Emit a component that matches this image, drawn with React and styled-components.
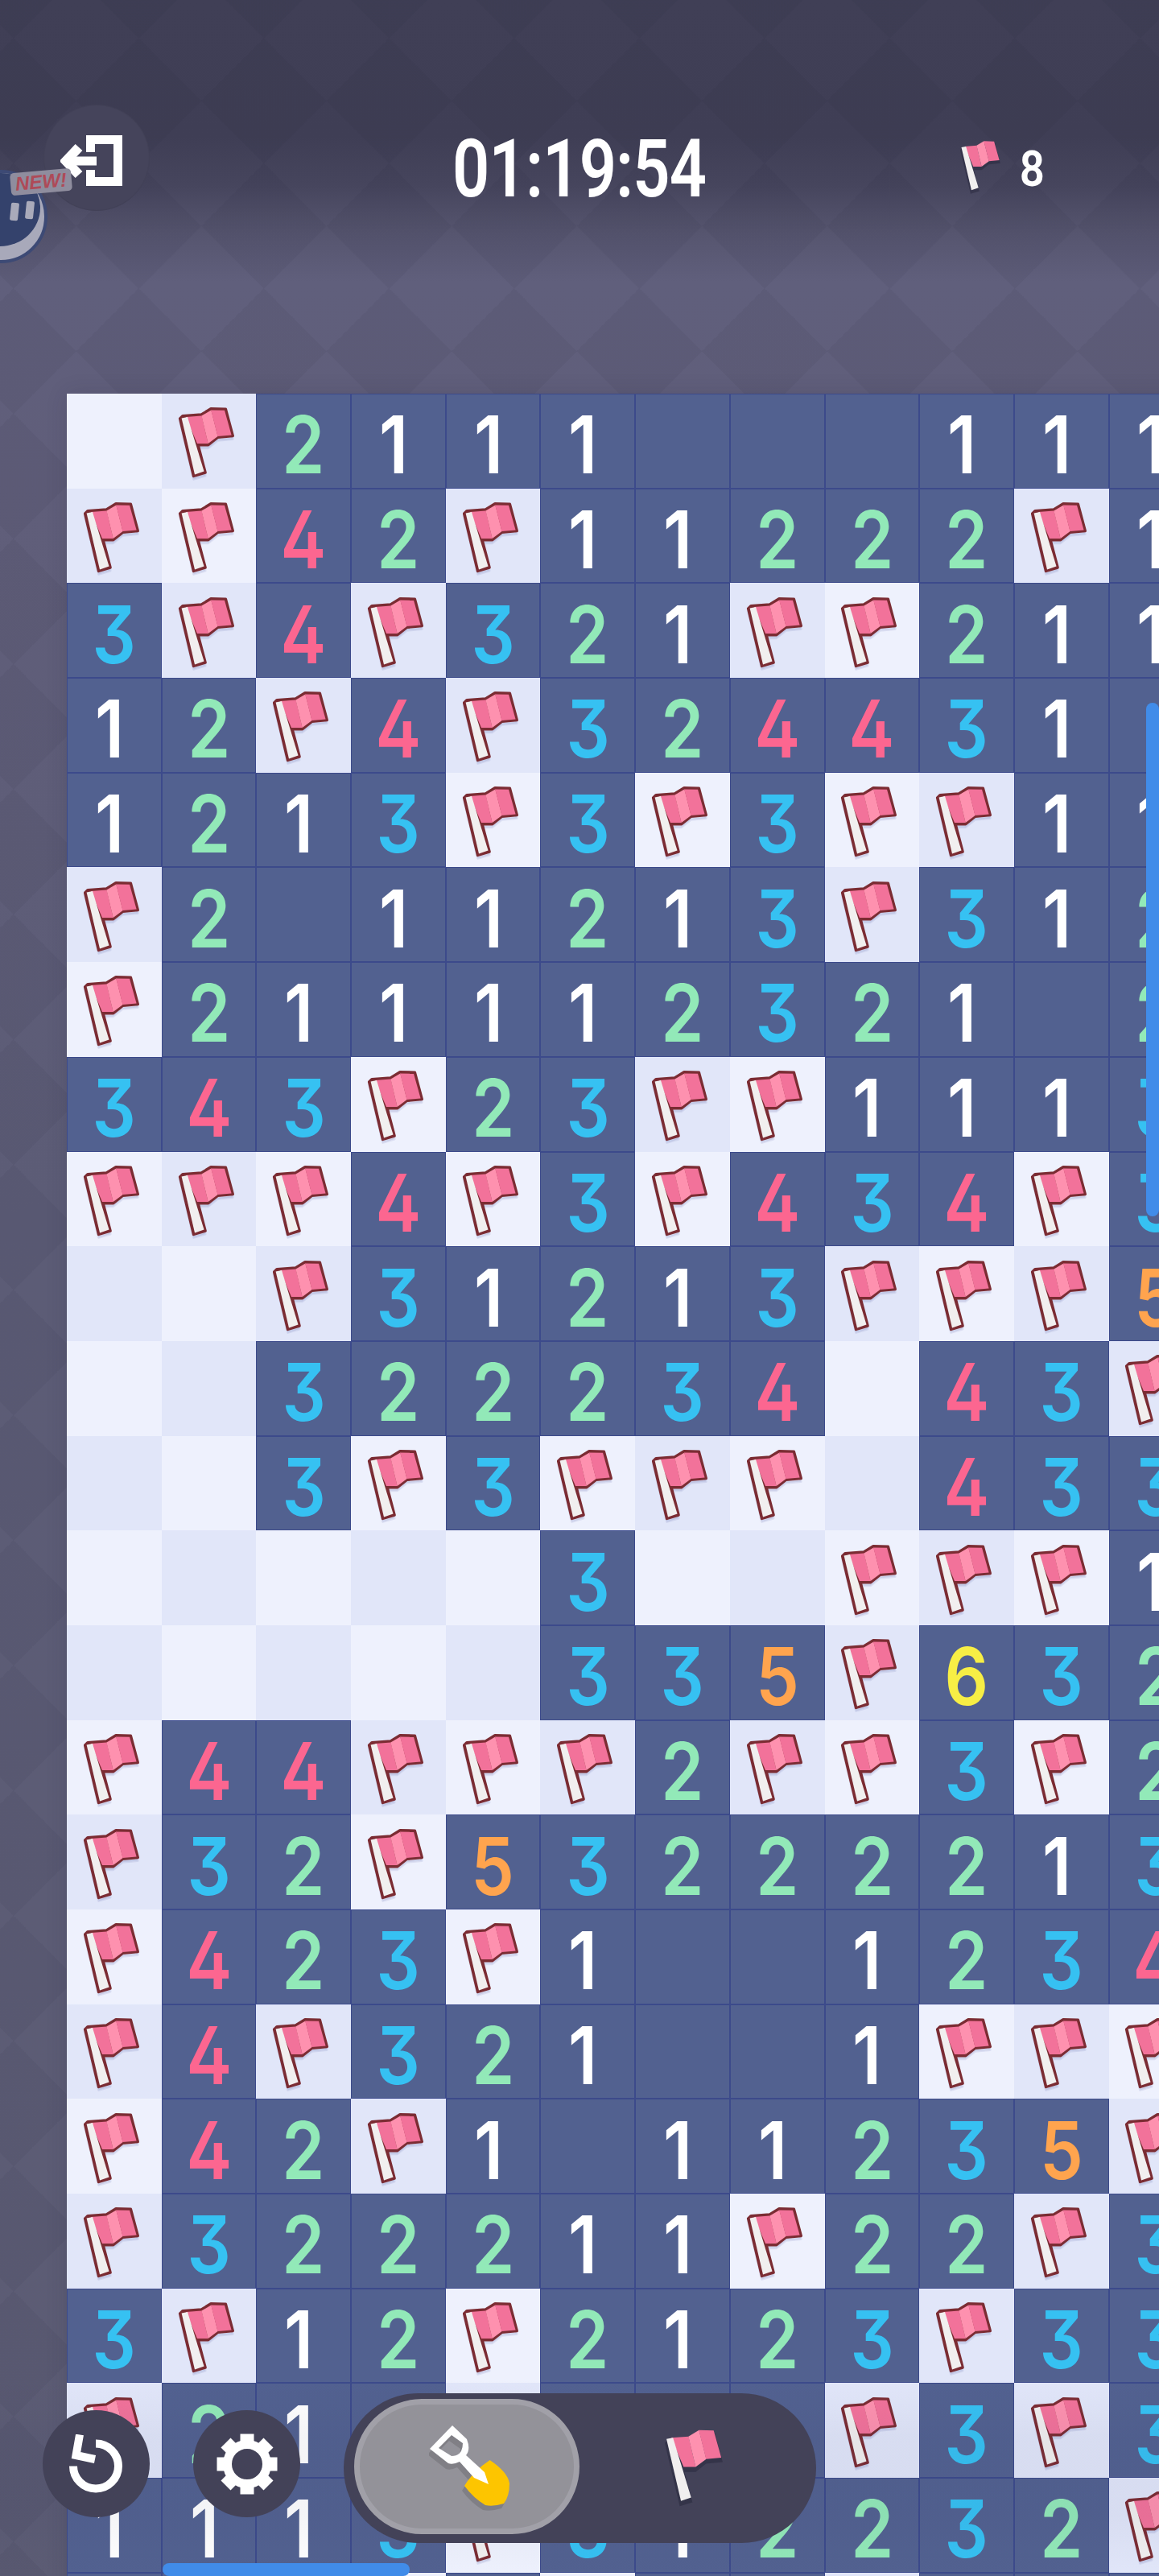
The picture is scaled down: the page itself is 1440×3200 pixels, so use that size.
import styled, { createGlobalStyle } from "styled-components"

// F flag, . closed blank, 0 open blank
const BOARD = [
  ".F2111000111",
  "FF42F11222F1",
  "3F4F321FF211",
  "12F4F3244310",
  "1213F3F3FF11",
  "F2011213F312",
  "F21111232102",
  "343F23FF1113",
  "FFF4F3F434F3",
  "..F31213FFF5",
  "..322234.43F",
  "..3F3FFF.433",
  ".....3..FFF1",
  ".....335F632",
  "F44FFF2FF3F2",
  "F32F53222213",
  "F423F1001234",
  "F4F321001FFF",
  "F42F1011235F",
  "F322211F22F3",
  "3F12F2123F33",
  "F210.000F3F3",
  "1113F312232F",
  "000.0.00.000",
]

const DIGIT_COLORS = {
  1: "#ffffff",
  2: "#92e9b8",
  3: "#36c1f2",
  4: "#fc6690",
  5: "#ffa44e",
  6: "#f7ee45",
}

const GlobalStyle = createGlobalStyle`
  html, body {
    margin: 0;
    padding: 0;
    background: #5a5a74;
  }
`

const Page = styled.div`
  position: relative;
  width: 1440px;
  height: 3200px;
  overflow: hidden;
  font-family: Inter, Roboto, "Liberation Sans", sans-serif;
  background-color: #5a5a74;
  background-image:
    linear-gradient(45deg, rgba(20, 20, 40, 0.055) 25%, transparent 25%),
    linear-gradient(-45deg, rgba(20, 20, 40, 0.055) 25%, transparent 25%),
    linear-gradient(45deg, transparent 75%, rgba(20, 20, 40, 0.055) 75%),
    linear-gradient(-45deg, transparent 75%, rgba(20, 20, 40, 0.055) 75%),
    linear-gradient(
      #403f56 0,
      #3f3e55 170px,
      #46455d 230px,
      #56556f 290px,
      #605f7c 350px,
      #605e7a 600px,
      #5c5c76 1500px,
      #5c5c74 3200px
    );
  background-size: 155.5px 155.5px, 155.5px 155.5px, 155.5px 155.5px, 155.5px 155.5px, 100% 100%;
  background-position: 17px 125px, 17px 125px, 17px 125px, 17px 125px, 0 0;
  background-repeat: repeat, repeat, repeat, repeat, no-repeat;
`

const Header = styled.header`
  display: grid;
  grid-template-columns: 1fr auto 1fr;
  align-items: start;
  height: 489px;
  box-sizing: border-box;
  padding: 130px 54px 0;
`

const ExitButton = styled.button`
  display: flex;
  align-items: center;
  justify-content: center;
  justify-self: start;
  position: relative;
  z-index: 2;
  width: 132px;
  height: 132px;
  padding: 0;
  border: 1px solid rgba(60, 60, 80, 0.35);
  border-radius: 50%;
  background: #45445b;
`

const ExitSvg = styled.svg`
  margin: 6px 0 0 -13px;
`

const Timer = styled.div`
  margin-top: 27px;
  font-family: Roboto, "Liberation Sans", sans-serif;
  font-size: 100px;
  font-weight: 600;
  line-height: 105px;
  letter-spacing: -1px;
  color: #ffffff;
  transform: scaleX(0.81);
`

const FlagCount = styled.div`
  display: flex;
  align-items: center;
  justify-self: end;
  gap: 20px;
  margin: 41px 93px 0 0;
  color: #ffffff;
  font-family: Roboto, "Liberation Sans", sans-serif;
  font-size: 62px;
  font-weight: 600;
  line-height: 70px;

  span {
    display: block;
    width: 28px;
    padding-top: 4px;
    text-align: center;
    transform: scaleX(0.88);
  }
`

const Mascot = styled.div`
  position: absolute;
  left: -57px;
  top: 211px;
  width: 116px;
  height: 116px;
  overflow: hidden;
  box-sizing: border-box;
  border-radius: 50%;
  border: 4px solid #3d4a75;
  background: #a8a9ba;

  &::before {
    content: "";
    position: absolute;
    left: 3px;
    top: -5px;
    width: 100px;
    height: 96px;
    border-radius: 50%;
    background: #34426c;
  }
`

const MascotEye = styled.i`
  position: absolute;
  top: ${(p) => p.$top}px;
  left: ${(p) => p.$left}px;
  width: 10px;
  height: 22px;
  border-radius: 2px;
  background: #a9aaba;
  transform: rotate(6deg);
`

const NewBadge = styled.div`
  position: absolute;
  z-index: 3;
  left: 13px;
  top: 212px;
  padding: 0 6px;
  border-radius: 5px;
  background: #8f8d9e;
  color: #ae4a58;
  font-family: "Liberation Sans", sans-serif;
  font-size: 24px;
  font-style: italic;
  font-weight: 700;
  line-height: 28px;
  transform: rotate(-5deg);
`

const Board = styled.div`
  display: grid;
  grid-template-columns: repeat(12, 117.7px);
  grid-auto-rows: 117.7px;
  width: max-content;
  margin-left: 83px;
  box-shadow: 0 0 24px rgba(40, 40, 60, 0.16);
`

const Cell = styled.div`
  display: flex;
  align-items: center;
  justify-content: center;
  min-width: 0;
  background: ${(p) => (p.$revealed ? "#526190" : p.$odd ? "#e1e6f9" : "#eef1fd")};
  box-shadow: ${(p) => (p.$revealed ? "inset 0 0 0 1px #3c4a8b" : "none")};
`

const Digit = styled.span`
  display: block;
  padding-top: 9px;
  font-family: Inter, Roboto, sans-serif;
  font-feature-settings: "cv09" 1, "cv02" 1;
  font-size: 99px;
  font-weight: 600;
  line-height: 100px;
  color: ${(p) => DIGIT_COLORS[p.$n]};
  transform: ${(p) => (p.$n === "1" ? "translateX(-6px) " : "")}scaleX(0.86);
`

const FlagSvg = styled.svg`
  display: block;
  flex: none;
  margin: ${(p) => p.$margin || "0"};
`

const ScrollThumb = styled.div`
  position: absolute;
  background: #418ce9;
  border-radius: 8px;
`

const VerticalThumb = styled(ScrollThumb)`
  left: 1424px;
  top: 873px;
  width: 16px;
  height: 638px;
`

const HorizontalThumb = styled(ScrollThumb)`
  left: 202px;
  top: 3184px;
  width: 307px;
  height: 16px;
`

const ControlsShade = styled.div`
  position: absolute;
  left: 0;
  right: 0;
  top: 2955px;
  height: 245px;
  pointer-events: none;
  background: linear-gradient(
    rgba(40, 45, 90, 0) 0,
    rgba(40, 45, 90, 0.05) 70px,
    rgba(40, 45, 90, 0.05) 170px,
    rgba(40, 45, 90, 0) 245px
  );
`

const Controls = styled.div`
  position: absolute;
  left: 53px;
  top: 2973px;
  display: flex;
  align-items: flex-start;
  gap: 54px;
`

const RoundButton = styled.button`
  display: flex;
  align-items: center;
  justify-content: center;
  flex: none;
  width: 133px;
  height: 133px;
  margin-top: 21px;
  padding: 0;
  border: 0;
  border-radius: 50%;
  background: #434258;
`

const ToolPill = styled.div`
  display: flex;
  align-items: center;
  box-sizing: border-box;
  width: 587px;
  height: 186px;
  padding: 0 0 0 13px;
  border-radius: 93px;
  background: #434258;
`

const ToolThumb = styled.div`
  display: flex;
  align-items: center;
  justify-content: center;
  box-sizing: border-box;
  flex: none;
  width: 280px;
  height: 168px;
  margin-top: -4px;
  border: 7px solid #a1a0a8;
  border-radius: 84px;
  background: #939299;
`

const ShovelSvg = styled.svg`
  margin: 4px 0 0 8px;
`

const ToolSlot = styled.div`
  display: flex;
  align-items: center;
  justify-content: center;
  flex: 1;
  padding-right: 10px;
`

function Flag({ width = 71, plain, margin }) {
  const outline =
    "M5 10.7 L28.3 9 L40 1.8 L58.3 2.3 L67.2 35.4 L48.3 37.3 L36.7 46.7 L24 46.7 L33 81 L18.6 85.4 L1.7 14 Z"
  return (
    <FlagSvg
      $margin={margin}
      width={width}
      height={(width * 95) / 71}
      viewBox="-1 -1 71 95"
    >
      <path
        d={outline}
        transform="translate(0 4)"
        fill={plain ? "rgba(20,20,40,0.3)" : "rgba(90,100,170,0.13)"}
        stroke={plain ? "none" : "rgba(90,100,170,0.13)"}
        strokeWidth="3"
        strokeLinejoin="round"
      />
      {!plain && (
        <path d={outline} fill="#7b2c33" stroke="#7b2c33" strokeWidth="3.6" strokeLinejoin="round" />
      )}
      <polygon points="9,12 28.6,10.6 36.6,45 23,45" fill="#f2729a" />
      <polygon points="28.4,10.6 40.4,3.4 48.6,36 36.6,45" fill="#fe91af" />
      <polygon points="40.2,3.4 57,3.8 65.6,34.4 48.4,36" fill="#f2729a" />
      <polygon points="3.6,13.4 11,12 31.5,79.5 20,83.4" fill="#f1efef" />
    </FlagSvg>
  )
}

function ExitIcon() {
  return (
    <ExitSvg width="77" height="63" viewBox="0 0 77 63" fill="none" stroke="#fff" strokeWidth="11">
      <path d="M37.5 21 V5.5 H71.5 V57.5 H37.5 V43" />
      <path d="M8 32 H45" />
      <path d="M23 15 L7 32 L23 49" strokeWidth="12" />
    </ExitSvg>
  )
}

function ResetIcon() {
  return (
    <svg width="67" height="73" viewBox="0 0 67 73" fill="none" stroke="#fff">
      <path d="M33 11.5 A28 28 0 1 1 5 39.5" strokeWidth="10" />
      <path d="M13 0.5 L8.5 26 L32 31" strokeWidth="10" />
    </svg>
  )
}

function GearIcon() {
  const teeth = [0, 45, 90, 135, 180, 225, 270, 315]
  return (
    <svg width="76" height="76" viewBox="0 0 76 76">
      {teeth.map((deg) => (
        <rect key={deg} x="29.5" y="0.5" width="17" height="16" fill="#fff" transform={`rotate(${deg} 38 38)`} />
      ))}
      <circle cx="38" cy="38" r="24.5" fill="none" stroke="#fff" strokeWidth="11" />
    </svg>
  )
}

function ShovelIcon() {
  const grip =
    "M29 0 L47 17 Q52 30 46 37 L69 58 L74 73 L56 65 L38 45 Q30 49 24 47 L1 29 Z M28 12 L12 28 L28 38 Q42 38 42 22 Z"
  const blade = "M75.6 43 Q98 58 100 72 Q100 88 93 97 Q80 101 70 99 Q55 90 44 75 Q50 64 66 50 Z"
  return (
    <ShovelSvg width="102" height="106" viewBox="0 0 102 106">
      <path d={grip} transform="translate(-3 7)" fill="rgba(0,0,0,0.13)" fillRule="evenodd" />
      <path d={blade} transform="translate(-3 6)" fill="rgba(0,0,0,0.13)" />
      <path d={blade} fill="#fdc500" />
      <path d={grip} fill="#fff" fillRule="evenodd" />
    </ShovelSvg>
  )
}

function BoardCell({ value, row, col }) {
  const odd = (row + col) % 2 === 1
  if (value === "F" || value === ".") {
    return (
      <Cell $odd={odd}>
        {value === "F" && <Flag margin="10px 7px 0 0" />}
      </Cell>
    )
  }
  return (
    <Cell $revealed>
      {value !== "0" && <Digit $n={value}>{value}</Digit>}
    </Cell>
  )
}

export default function App() {
  return (
    <Page>
      <GlobalStyle />
      <Mascot>
        <MascotEye $left={66} $top={37} />
        <MascotEye $left={85} $top={35} />
      </Mascot>
      <NewBadge>NEW!</NewBadge>
      <Header>
        <ExitButton aria-label="Exit">
          <ExitIcon />
        </ExitButton>
        <Timer>01:19:54</Timer>
        <FlagCount>
          <Flag width={54} plain />
          <span>8</span>
        </FlagCount>
      </Header>
      <Board>
        {BOARD.map((line, row) =>
          line.split("").map((value, col) => (
            <BoardCell key={`${row}-${col}`} value={value} row={row} col={col} />
          ))
        )}
      </Board>
      <VerticalThumb />
      <ControlsShade />
      <HorizontalThumb />
      <Controls>
        <RoundButton aria-label="Restart">
          <ResetIcon />
        </RoundButton>
        <RoundButton aria-label="Settings">
          <GearIcon />
        </RoundButton>
        <ToolPill>
          <ToolThumb>
            <ShovelIcon />
          </ToolThumb>
          <ToolSlot>
            <Flag width={78} plain />
          </ToolSlot>
        </ToolPill>
      </Controls>
    </Page>
  )
}
